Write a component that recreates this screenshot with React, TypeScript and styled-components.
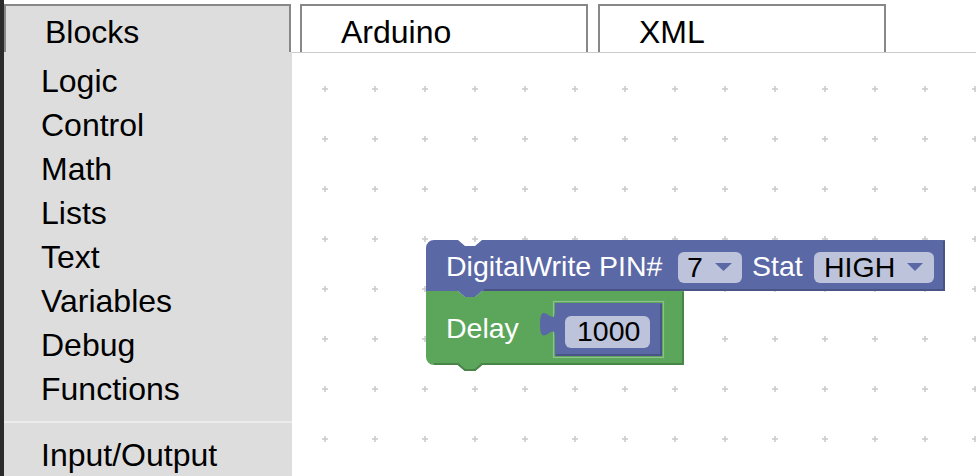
import React from "react";
import styled, { createGlobalStyle } from "styled-components";

const GlobalStyle = createGlobalStyle`
  html, body {
    margin: 0;
    padding: 0;
    background: #ffffff;
    overflow: hidden;
  }
  body {
    font-family: "Liberation Sans", Arial, Helvetica, sans-serif;
    color: #000;
  }
`;

const Page = styled.div`
  display: flex;
  width: 976px;
  height: 476px;
  background: #ffffff;
  overflow: hidden;
`;

const EdgeStrip = styled.div`
  flex: none;
  width: 4px;
  background: #2b2b2b;
`;

const Sidebar = styled.aside`
  flex: none;
  width: 288px;
  display: flex;
  flex-direction: column;
  padding-top: 4px;
  box-sizing: border-box;
`;

const Tab = styled.div<{ $active?: boolean; $w: number }>`
  flex: none;
  box-sizing: border-box;
  width: ${(p) => p.$w}px;
  height: 48px;
  border: 2px solid #888888;
  border-bottom: none;
  background: ${(p) => (p.$active ? "#dddddd" : "#ffffff")};
  padding: 8px 0 0 39px;
  font-size: 32px;
  line-height: 36px;
  white-space: nowrap;
`;

const CategoryList = styled.nav`
  flex: 1;
  display: flex;
  flex-direction: column;
  background: #dddddd;
  padding-top: 7px;
  overflow: hidden;
`;

const CategoryItem = styled.div`
  flex: none;
  padding-left: 37px;
  font-size: 32px;
  line-height: 44px;
  white-space: nowrap;
`;

const Separator = styled.div`
  flex: none;
  height: 2px;
  margin: 10px 0;
  background: #ececec;
`;

const Main = styled.main`
  flex: 1;
  display: flex;
  flex-direction: column;
  padding-top: 4px;
  min-width: 0;
`;

const TabBar = styled.div`
  flex: none;
  display: flex;
  gap: 10px;
  height: 49px;
  box-sizing: border-box;
  padding-left: 8px;
  border-bottom: 1px solid #cccccc;
`;

const Workspace = styled.section`
  flex: 1;
  min-height: 0;
  overflow: hidden;
`;

const Canvas = styled.svg`
  display: block;
  width: 100%;
  height: 100%;
`;

const BlockText = styled.text<{ $field?: boolean }>`
  font-family: "Liberation Sans", Arial, Helvetica, sans-serif;
  font-size: 28.5px;
  fill: ${(p) => (p.$field ? "#000000" : "#ffffff")};
`;

const categories = [
  "Logic",
  "Control",
  "Math",
  "Lists",
  "Text",
  "Variables",
  "Debug",
  "Functions",
];

const PURPLE = "#5b68a6";
const PURPLE_DARK = "#495385";
const GREEN = "#5ba65b";
const GREEN_DARK = "#498549";
const GREEN_LIGHT = "#8cc18c";
const FIELD = "#bdc3db";

function BlocklyCanvas() {
  return (
    <Canvas viewBox="292 53 684 423" preserveAspectRatio="xMinYMin slice">
      <defs>
        <pattern
          id="grid"
          x="0"
          y="0"
          width="50"
          height="50"
          patternUnits="userSpaceOnUse"
        >
          <rect x="22" y="38.25" width="6" height="1.5" fill="#c9c9c9" />
          <rect x="24.25" y="36" width="1.5" height="6" fill="#c9c9c9" />
        </pattern>
      </defs>
      <rect x="292" y="53" width="684" height="423" fill="#ffffff" />
      <rect x="292" y="53" width="684" height="423" fill="url(#grid)" />

      {/* Delay block (green) */}
      <path
        d="M426,291 H458 l7,6 h10 l7,-6 H684 V365 H482 l-7,6 h-10 l-7,-6 H434 A8,8 0 0 1 426,357 Z"
        fill={GREEN}
      />
      <path
        d="M683,292 V364 H482 l-7,6 h-10 l-7,-6 H434"
        fill="none"
        stroke={GREEN_DARK}
        strokeWidth="2"
      />
      <rect
        x="553.5"
        y="301.5"
        width="110"
        height="56"
        fill="none"
        stroke={GREEN_LIGHT}
        strokeWidth="1.2"
      />
      <BlockText x="446" y="338">
        Delay
      </BlockText>

      {/* Number block (purple) */}
      <path
        d="M555,303 H662 V356 H555 V337 c0,-17 -15,13.6 -15,-12.75 s15,4.25 15,-12.75 Z"
        fill={PURPLE}
      />
      <path
        d="M661,304 V355 H556"
        fill="none"
        stroke={PURPLE_DARK}
        strokeWidth="2"
      />
      <rect x="565" y="316" width="85" height="32" rx="6" fill={FIELD} />
      <BlockText $field x="577" y="341">
        1000
      </BlockText>

      {/* DigitalWrite block (purple) */}
      <path
        d="M426,248 A8,8 0 0 1 434,240 H458 l7,6 h10 l7,-6 H945 V291 H482 l-7,6 h-10 l-7,-6 H426 Z"
        fill={PURPLE}
      />
      <path
        d="M944,241 V290 H484"
        fill="none"
        stroke={PURPLE_DARK}
        strokeWidth="2"
      />
      <BlockText x="446" y="276">
        DigitalWrite PIN#
      </BlockText>
      <rect x="678" y="252" width="64" height="31" rx="6" fill={FIELD} />
      <BlockText $field x="687" y="277">
        7
      </BlockText>
      <polygon points="715,263 732,263 723.5,271" fill={PURPLE} />
      <BlockText x="752" y="276">
        Stat
      </BlockText>
      <rect x="814" y="252" width="120" height="31" rx="6" fill={FIELD} />
      <BlockText $field x="824" y="277">
        HIGH
      </BlockText>
      <polygon points="907,263 923,263 915,271" fill={PURPLE} />
    </Canvas>
  );
}

export default function App() {
  return (
    <>
      <GlobalStyle />
      <Page>
        <EdgeStrip />
        <Sidebar>
          <Tab $active $w={287}>
            Blocks
          </Tab>
          <CategoryList>
            {categories.map((c) => (
              <CategoryItem key={c}>{c}</CategoryItem>
            ))}
            <Separator />
            <CategoryItem>Input/Output</CategoryItem>
          </CategoryList>
        </Sidebar>
        <Main>
          <TabBar>
            <Tab $w={288}>Arduino</Tab>
            <Tab $w={288}>XML</Tab>
          </TabBar>
          <Workspace>
            <BlocklyCanvas />
          </Workspace>
        </Main>
      </Page>
    </>
  );
}
